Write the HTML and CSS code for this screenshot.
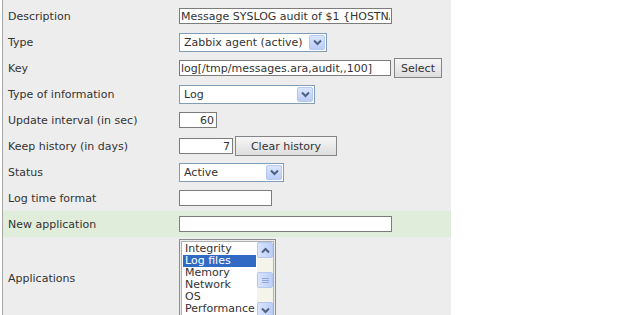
FILE: index.html
```html
<!DOCTYPE html>
<html>
<head>
<meta charset="utf-8">
<link rel="stylesheet" href="styles.css">
</head>
<body>
<div class="panel">
  <div class="row">
    <div class="label">Description</div>
    <div class="ctrl"><input class="txt w-desc" type="text" value="Message SYSLOG audit of $1 {HOSTNAME}"></div>
  </div>
  <div class="row">
    <div class="label">Type</div>
    <div class="ctrl">
      <div class="sel w-type"><span class="sel-text">Zabbix agent (active)</span><span class="arrow"><svg width="9" height="7" viewBox="0 0 9 7"><path d="M1 1.5 L4.5 5 L8 1.5" fill="none" stroke="#4d6185" stroke-width="2"/></svg></span></div>
    </div>
  </div>
  <div class="row">
    <div class="label">Key</div>
    <div class="ctrl"><input class="txt w-key" type="text" value="log[/tmp/messages.ara,audit,,100]"><button class="btn w-select">Select</button></div>
  </div>
  <div class="row">
    <div class="label">Type of information</div>
    <div class="ctrl">
      <div class="sel w-info"><span class="sel-text">Log</span><span class="arrow"><svg width="9" height="7" viewBox="0 0 9 7"><path d="M1 1.5 L4.5 5 L8 1.5" fill="none" stroke="#4d6185" stroke-width="2"/></svg></span></div>
    </div>
  </div>
  <div class="row">
    <div class="label">Update interval (in sec)</div>
    <div class="ctrl"><input class="txt num w-upd" type="text" value="60"></div>
  </div>
  <div class="row">
    <div class="label">Keep history (in days)</div>
    <div class="ctrl"><input class="txt num w-keep" type="text" value="7"><button class="btn w-clear">Clear history</button></div>
  </div>
  <div class="row">
    <div class="label">Status</div>
    <div class="ctrl">
      <div class="sel w-status"><span class="sel-text">Active</span><span class="arrow"><svg width="9" height="7" viewBox="0 0 9 7"><path d="M1 1.5 L4.5 5 L8 1.5" fill="none" stroke="#4d6185" stroke-width="2"/></svg></span></div>
    </div>
  </div>
  <div class="row">
    <div class="label">Log time format</div>
    <div class="ctrl"><input class="txt w-log" type="text" value=""></div>
  </div>
  <div class="row green">
    <div class="label">New application</div>
    <div class="ctrl"><input class="txt w-new" type="text" value=""></div>
  </div>
  <div class="row tall">
    <div class="label">Applications</div>
    <div class="ctrl">
      <div class="listbox">
        <div class="list-inner">
          <ul class="items">
            <li>Integrity</li>
            <li class="on">Log files</li>
            <li>Memory</li>
            <li>Network</li>
            <li>OS</li>
            <li>Performance</li>
          </ul>
          <div class="sbar">
            <span class="sbtn"><svg width="9" height="7" viewBox="0 0 9 7"><path d="M1 5.5 L4.5 2 L8 5.5" fill="none" stroke="#4d6185" stroke-width="2"/></svg></span>
            <span class="track"></span>
            <span class="thumb"><svg width="7" height="7" viewBox="0 0 7 7"><path d="M0 1.5H7M0 3.5H7M0 5.5H7" stroke="#8fa8d8" stroke-width="1"/></svg></span>
            <span class="track grow"></span>
            <span class="sbtn"><svg width="9" height="7" viewBox="0 0 9 7"><path d="M1 1.5 L4.5 5 L8 1.5" fill="none" stroke="#4d6185" stroke-width="2"/></svg></span>
          </div>
        </div>
      </div>
    </div>
  </div>
</div>
</body>
</html>
```

FILE: styles.css
```css
* { box-sizing: border-box; }
html, body {
  margin: 0;
  padding: 0;
  background: #ffffff;
  font-family: "DejaVu Sans", Verdana, sans-serif;
  font-size: 11px;
  color: #333;
}
.panel {
  margin-left: 2px;
  width: 449px;
  height: 315px;
  overflow: hidden;
  border-left: 1px solid #a8a8a8;
  background: #ededed;
  padding-top: 3px;
}
.row {
  display: flex;
  align-items: center;
  height: 26px;
}
.row.green { background: #e0eddb; }
.row.tall { height: 85px; align-items: flex-start; }
.row.tall .label { align-self: center; padding-bottom: 2px; }
.row.tall .ctrl { padding-top: 2px; }
.label {
  width: 176px;
  padding-left: 5px;
  white-space: nowrap;
}
.ctrl {
  display: flex;
  align-items: center;
  gap: 2px;
}
.txt {
  height: 16px;
  border: 1px solid #7c7c7c;
  background: #fff;
  font-family: "DejaVu Sans", Verdana, sans-serif;
  font-size: 11px;
  color: #333;
  padding: 0 1px;
  margin: 0;
  outline: none;
}
.num { text-align: right; padding-right: 2px; }
.w-desc { width: 213px; }
.w-key { width: 212px; }
.w-upd { width: 38px; }
.w-keep { width: 54px; }
.w-log { width: 93px; }
.w-new { width: 213px; }

.btn {
  height: 20px;
  margin: 0;
  padding: 0;
  border: 1px solid #858585;
  background: linear-gradient(#f6f6f6, #dedede);
  font-family: "DejaVu Sans", Verdana, sans-serif;
  font-size: 11px;
  color: #333;
}
.w-select { width: 48px; margin-left: 1px; }
.w-clear { width: 102px; }

.sel {
  position: relative;
  height: 19px;
  border: 1px solid #7f9db9;
  background: #fff;
  display: flex;
  align-items: center;
  padding-left: 4px;
}
.w-type { width: 148px; }
.w-info { width: 136px; }
.w-status { width: 105px; }
.sel-text { white-space: nowrap; }
.arrow {
  position: absolute;
  right: 1px;
  top: 1px;
  width: 16px;
  height: 15px;
  border: 1px solid #b5c8f0;
  border-radius: 2px;
  background: linear-gradient(#dbe6fd, #b9cdf7);
  display: flex;
  align-items: center;
  justify-content: center;
}

.listbox {
  width: 97px;
  height: 82px;
  border: 1px solid #8c8c8c;
  padding: 1px;
  background: #ededed;
}
.list-inner {
  display: flex;
  height: 100%;
  border: 1px solid #b0b0b0;
  background: #fff;
}
.items {
  list-style: none;
  margin: 0;
  padding: 1px 1px 0 1px;
  flex: 1;
  font-size: 11px;
  line-height: 12px;
}
.items li { padding-left: 2px; white-space: nowrap; }
.items li.on { background: #316ac5; color: #fff; }
.sbar {
  width: 16px;
  display: flex;
  flex-direction: column;
  background: #f5f4ea;
}
.sbtn, .thumb {
  height: 16px;
  border: 1px solid #b5c8f0;
  border-radius: 2px;
  background: linear-gradient(90deg, #d9e4fd, #bccff8);
  display: flex;
  align-items: center;
  justify-content: center;
}
.track { height: 14px; }
.track.grow { flex: 1; }
```
